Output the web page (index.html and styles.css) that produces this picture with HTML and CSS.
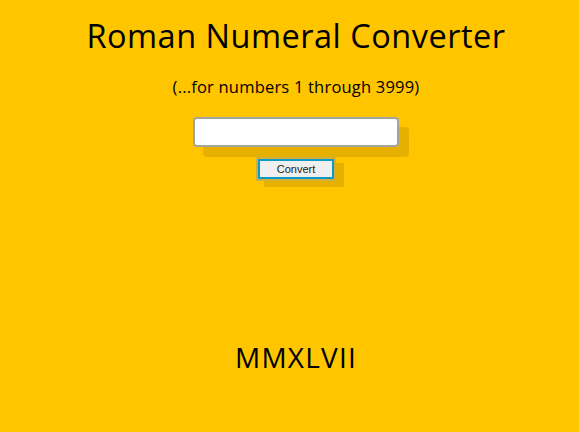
FILE: index.html
```html
<!DOCTYPE html>
<html>
<head>
<meta charset="utf-8">
<link rel="stylesheet" href="styles.css">
</head>
<body>
<main class="app">
  <h1 class="title">Roman Numeral Converter</h1>
  <p class="subtitle">(...for numbers 1 through 3999)</p>
  <div class="form">
    <input class="number-input" type="text">
    <button class="convert-btn">Convert</button>
  </div>
  <div class="output">MMXLVII</div>
</main>
</body>
</html>
```
FILE: styles.css
```css
html, body {
  margin: 0;
  padding: 0;
  background: #ffc600;
  height: 100%;
}
body {
  font-family: "Open Sans", "Noto Sans", sans-serif;
  color: #000;
}
.app {
  display: flex;
  flex-direction: column;
  align-items: center;
  padding-left: 13px;
}
.title {
  margin: 16px 0 0;
  font-size: 32.5px;
  font-weight: 400;
  line-height: 40px;
  letter-spacing: 0.5px;
}
.subtitle {
  margin: 21px 0 0;
  font-size: 16.5px;
  line-height: 20px;
  letter-spacing: 0.2px;
}
.form {
  margin-top: 20px;
  display: flex;
  flex-direction: column;
  align-items: center;
}
.number-input {
  box-sizing: border-box;
  width: 206px;
  height: 30px;
  border: 2px solid #a3a3a3;
  border-radius: 4px;
  background: #fff;
  box-shadow: 10px 10px 0 #e5b000;
  outline: none;
}
.convert-btn {
  box-sizing: border-box;
  margin-top: 12px;
  width: 76px;
  height: 20px;
  padding: 0;
  border: 2px solid #0e9ac6;
  background: #efefef;
  font-family: "Liberation Sans", Arial, sans-serif;
  font-size: 11px;
  color: #222;
  box-shadow: 0 0 0 2px #d2ae3c, 8px 6px 0 2px #e5b000;
}
.output {
  margin-top: 161px;
  font-size: 28px;
  line-height: 34px;
  letter-spacing: 1.2px;
}
```
